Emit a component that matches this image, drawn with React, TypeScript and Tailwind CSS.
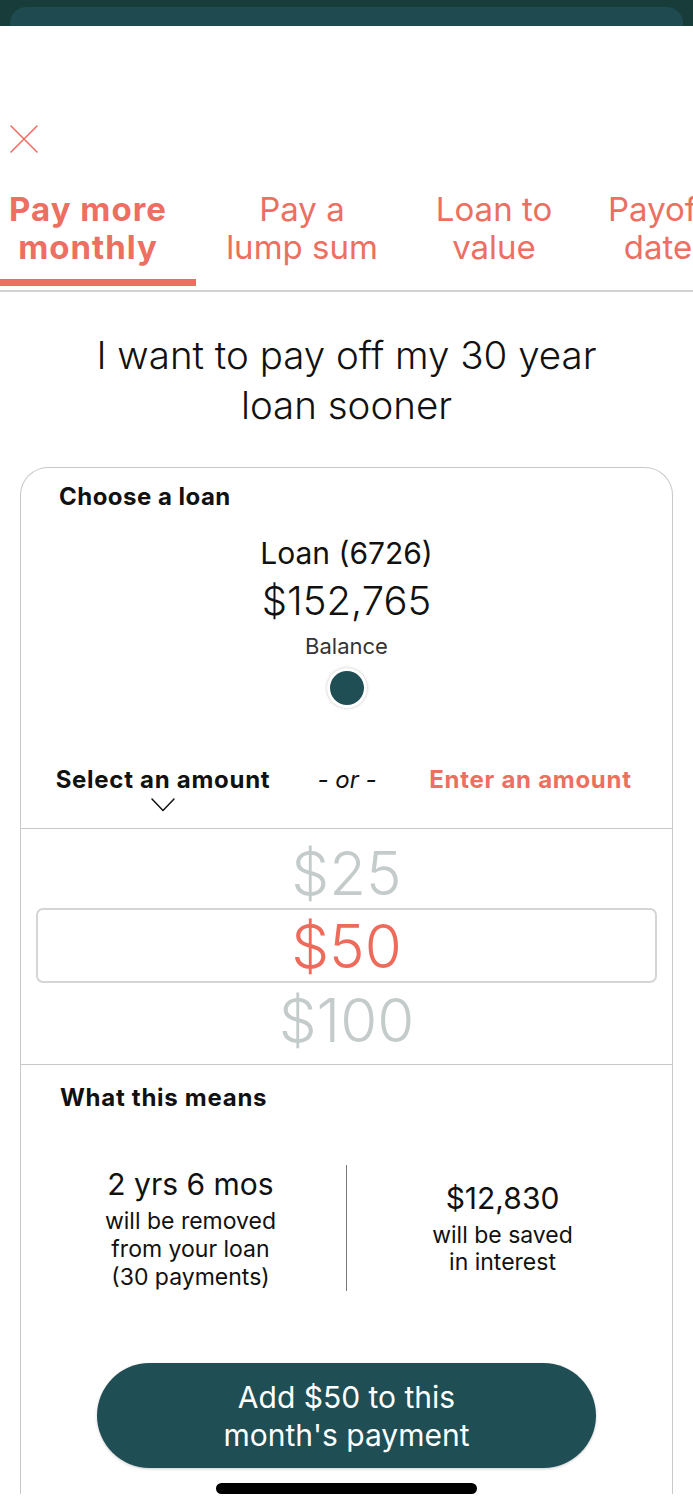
import React from 'react';

const coral = 'text-[#ec6f62]';

function CloseIcon() {
  return (
    <svg width="28" height="28" viewBox="0 0 28 28" fill="none">
      <path d="M1 1 L27 27 M27 1 L1 27" stroke="#ec6f62" strokeWidth="1.6" strokeLinecap="round" />
    </svg>
  );
}

function Chevron() {
  return (
    <svg width="24" height="14" viewBox="0 0 24 14" fill="none">
      <path d="M1 1 L12 12.5 L23 1" stroke="#111" strokeWidth="1.5" strokeLinecap="round" strokeLinejoin="round" />
    </svg>
  );
}

export default function App() {
  const tabs = [
    { label: ['Pay more', 'monthly'], w: 'w-[196px] pr-[20px]', active: true },
    { label: ['Pay a', 'lump sum'], w: 'w-[212px]', active: false },
    { label: ['Loan to', 'value'], w: 'w-[172px]', active: false },
    { label: ['Payoff', 'date'], w: 'w-[156px]', active: false },
  ];

  return (
    <div className="w-[693px] h-[1500px] overflow-hidden bg-white font-['Inter',sans-serif] text-[#111]">
      {/* status bar peek */}
      <div className="h-[26px] bg-[#173c3a] pt-[7px] px-[10px]">
        <div className="h-full rounded-t-[16px] bg-[#1f4a4f]" />
      </div>

      <div className="pt-[99px] pl-[10px]">
        <CloseIcon />
      </div>

      {/* Tabs */}
      <div className="mt-[37px] flex overflow-hidden">
        {tabs.map((t, i) => (
          <div key={i} className="shrink-0 flex flex-col">
            <div
              className={`${t.w} text-center text-[33px] leading-[38px] ${coral} ${t.active ? 'font-bold tracking-[0.03em]' : 'font-normal'} whitespace-nowrap`}
            >
              <div>{t.label[0]}</div>
              <div>{t.label[1]}</div>
            </div>
            <div className={`mt-[13px] h-[7px] ${t.active ? 'bg-[#ec6f62]' : ''}`} />
          </div>
        ))}
      </div>
      <div className="mt-[4px] h-[2px] bg-[#d2d2d2]" />

      <h1 className="mt-[38px] text-center text-[38.5px] leading-[50px] font-light">
        I want to pay off my 30 year
        <br />
        loan sooner
      </h1>

      {/* Card */}
      <div className="mt-[37px] mx-[20px] border-t border-x border-[#c9c9c9] rounded-t-[28px]">
        <div className="h-[58px] flex items-center pl-[38px] text-[24px] font-bold tracking-[0.02em]">
          Choose a loan
        </div>

        <div className="flex flex-col items-center">
          <div className="mt-[7px] text-[30px] leading-[40px]">Loan (6726)</div>
          <div className="mt-[4px] text-[40px] leading-[48px] font-light">$152,765</div>
          <div className="mt-[8px] text-[22px] leading-[26px] text-[#333]">Balance</div>
          <div className="mt-[9px] w-[40px] h-[40px] rounded-full bg-white shadow-[0_0_3px_rgba(0,0,0,0.25)] flex items-center justify-center">
            <div className="w-[34px] h-[34px] rounded-full bg-[#1f4e55]" />
          </div>
        </div>

        <div className="mt-[57px] grid grid-cols-[284px_84px_1fr] items-start">
          <div className="flex flex-col items-center">
            <div className="text-[24px] leading-[30px] font-bold tracking-[0.03em] whitespace-nowrap">Select an amount</div>
            <div className="mt-[3px] h-[14px]">
              <Chevron />
            </div>
          </div>
          <div className="text-[24px] leading-[30px] italic text-center whitespace-nowrap">- or -</div>
          <div className={`text-center text-[24px] leading-[30px] font-bold tracking-[0.03em] whitespace-nowrap ${coral}`}>
            Enter an amount
          </div>
        </div>

        {/* Picker */}
        <div className="mt-[16px] border-t border-[#c9c9c9] pt-[8px] pb-[7px] flex flex-col">
          <div className="h-[71px] flex items-center justify-center text-[60px] font-light text-[#c4cbcb]">$25</div>
          <div className="mx-[15px] h-[75px] rounded-[7px] border-2 border-[#d5d5d5] flex items-center justify-center text-[60px] font-light text-[#ee6a5a]">
            $50
          </div>
          <div className="h-[74px] flex items-center justify-center text-[60px] font-light text-[#c4cbcb]">$100</div>
        </div>

        <div className="border-t border-[#c9c9c9] h-[67px] flex items-center pl-[39px] text-[24px] font-bold tracking-[0.03em]">
          What this means
        </div>

        {/* Results */}
        <div className="mt-[34px] px-[14px] grid grid-cols-[1fr_1px_1fr] items-center h-[126px]">
          <div className="flex flex-col items-center text-center">
            <div className="text-[30px] leading-[36px]">2 yrs 6 mos</div>
            <div className="mt-[5px] text-[23px] leading-[28px]">
              will be removed
              <br />
              from your loan
              <br />
              (30 payments)
            </div>
          </div>
          <div className="h-full bg-[#777]" />
          <div className="flex flex-col items-center text-center">
            <div className="text-[30px] leading-[36px]">$12,830</div>
            <div className="mt-[6px] text-[23px] leading-[27px]">
              will be saved
              <br />
              in interest
            </div>
          </div>
        </div>

        <div className="mt-[72px] flex flex-col items-center">
          <button className="w-[499px] h-[105px] rounded-full bg-[#1f4e55] text-white text-[30px] leading-[38px] shadow-[0_1px_3px_rgba(0,0,0,0.2)]">
            Add $50 to this
            <br />
            month's payment
          </button>
          <div className="mt-[15px] w-[261px] h-[11px] rounded-full bg-black" />
        </div>
      </div>
    </div>
  );
}
